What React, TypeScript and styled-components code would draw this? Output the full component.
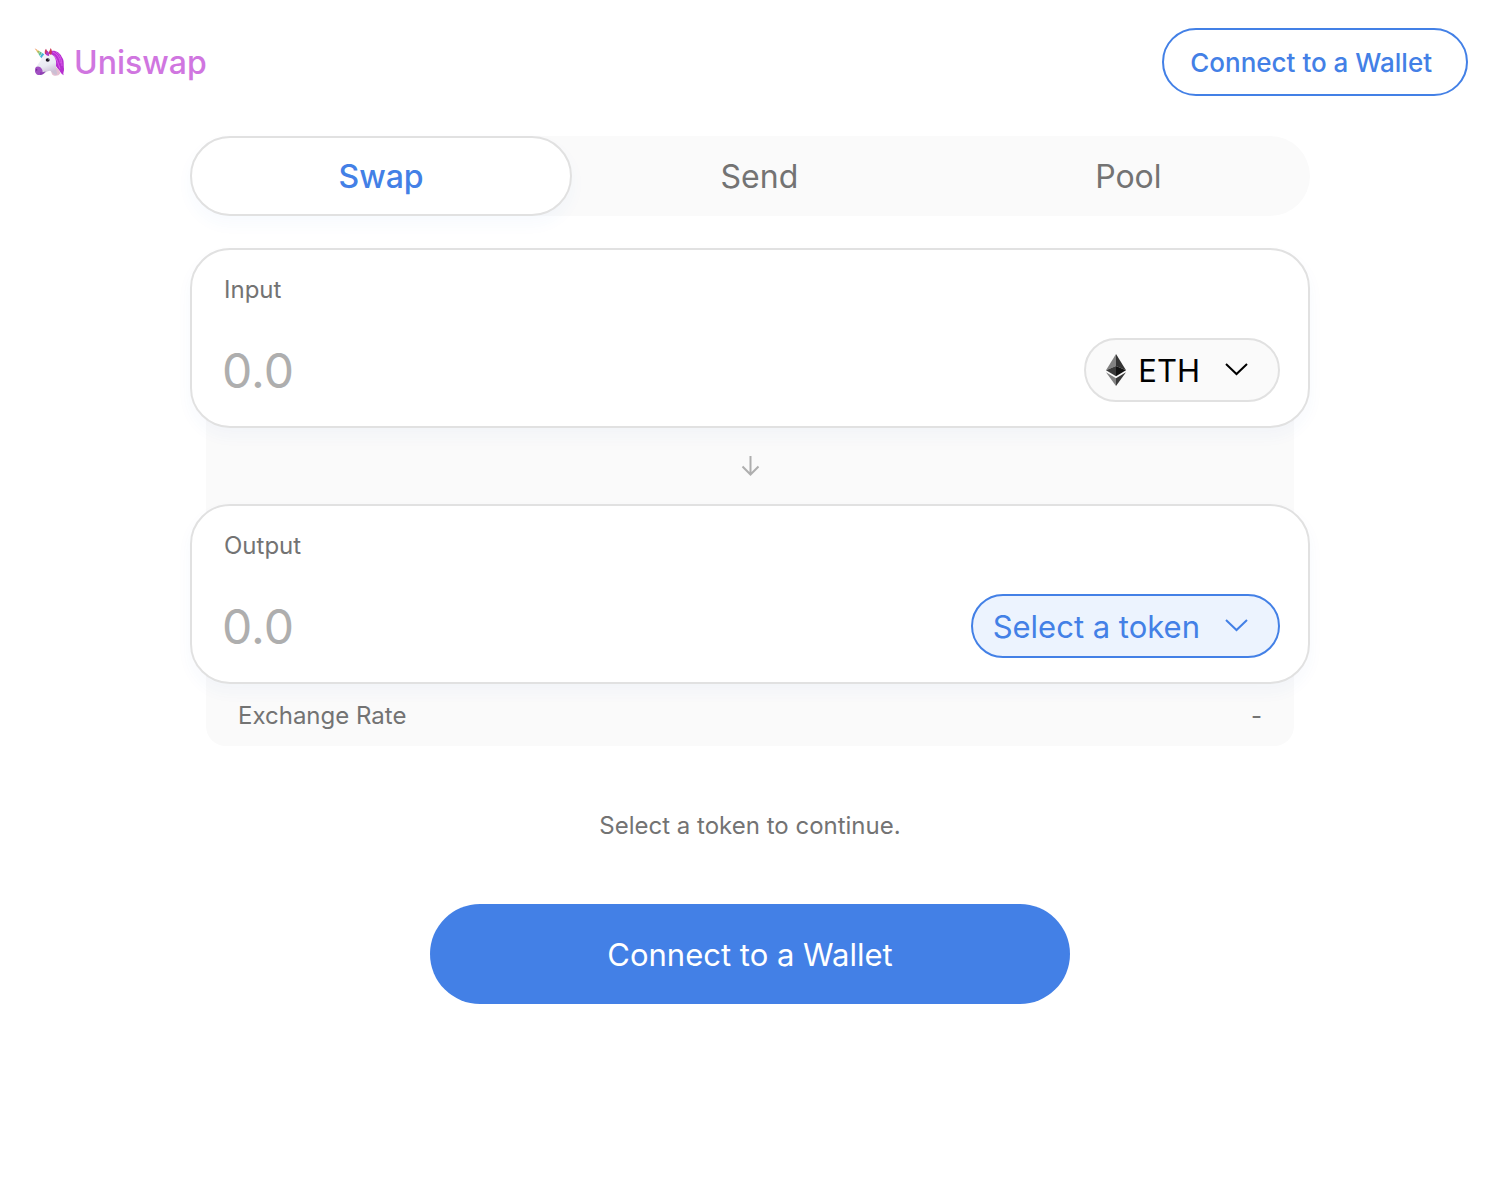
import React, { useState } from "react";
import styled, { createGlobalStyle, css } from "styled-components";

const colors = {
  blue: "#4380e6",
  paleBlue: "#ecf3fe",
  purple: "#d076e0",
  ink: "#000000",
  dove: "#737373",
  chalice: "#aeaeae",
  mercury: "#e1e1e1",
  concrete: "#fafafa",
};

const GlobalStyle = createGlobalStyle`
  *, *::before, *::after { box-sizing: border-box; }
  body {
    margin: 0;
    background: #ffffff;
    color: ${colors.ink};
    font-family: Inter, "Liberation Sans", sans-serif;
    font-size: 24px;
    line-height: 28px;
    -webkit-font-smoothing: antialiased;
  }
  button, input { font-family: inherit; }
`;

const Header = styled.header`
  display: flex;
  align-items: center;
  justify-content: space-between;
  padding: 28px 32px;
`;

const Brand = styled.a`
  display: flex;
  align-items: center;
  gap: 6px;
  color: ${colors.purple};
  font-size: 32px;
  font-weight: 500;
  line-height: 40px;
  text-decoration: none;
`;

const BrandName = styled.span`
  padding-top: 2px;
`;

const WalletStatus = styled.button`
  height: 68px;
  padding: 0 34px 0 26px;
  border: 2px solid ${colors.blue};
  border-radius: 34px;
  background: transparent;
  color: ${colors.blue};
  font-size: 26px;
  font-weight: 500;
  cursor: pointer;
`;

const Main = styled.main`
  max-width: 1184px;
  margin: 0 auto;
  padding: 12px 32px 64px;
`;

const Tabs = styled.nav`
  display: flex;
  height: 80px;
  margin-bottom: 32px;
  border-radius: 40px;
  background: ${colors.concrete};
`;

const Tab = styled.a<{ $active?: boolean }>`
  display: flex;
  flex: 1 0 auto;
  align-items: center;
  justify-content: center;
  padding-top: 2px;
  border: 2px solid transparent;
  border-radius: 40px;
  color: ${colors.dove};
  font-size: 32px;
  text-decoration: none;
  ${({ $active }) =>
    $active &&
    css`
      border-color: ${colors.mercury};
      background: #ffffff;
      box-shadow: 0 8px 16px rgba(47, 128, 237, 0.04);
      color: ${colors.blue};
      font-weight: 500;
    `}
`;

const Panel = styled.section`
  position: relative;
  z-index: 1;
  padding: 24px 28px 24px 30px;
  border: 2px solid ${colors.mercury};
  border-radius: 40px;
  background: #ffffff;
  box-shadow: 0 8px 16px rgba(47, 100, 210, 0.04);
`;

const PanelLabel = styled.label`
  display: block;
  margin: 2px 2px 34px;
  color: ${colors.dove};
`;

const PanelRow = styled.div`
  display: flex;
  align-items: center;
`;

const Amount = styled.input`
  flex: 1 1 0;
  min-width: 0;
  height: 64px;
  padding: 0;
  border: none;
  outline: none;
  background: transparent;
  font-size: 48px;
  &::placeholder {
    color: ${colors.chalice};
    opacity: 1;
  }
`;

const TokenButton = styled.button<{ $empty?: boolean }>`
  display: flex;
  align-items: center;
  height: 64px;
  padding: 0 30px 0 ${({ $empty }) => ($empty ? 20 : 14)}px;
  border: 2px solid ${({ $empty }) => ($empty ? colors.blue : colors.mercury)};
  border-radius: 32px;
  background: ${({ $empty }) => ($empty ? colors.paleBlue : colors.concrete)};
  color: ${({ $empty }) => ($empty ? colors.blue : colors.ink)};
  font-size: 31px;
  cursor: pointer;
`;

const TokenName = styled.span`
  margin: 0 24px 0 0;
  svg + & {
    margin-left: 6px;
  }
`;

const Strip = styled.div`
  display: flex;
  align-items: center;
  justify-content: center;
  height: 156px;
  margin: -40px 16px;
  background: ${colors.concrete};
`;

const RateStrip = styled.dl`
  display: flex;
  justify-content: space-between;
  margin: -40px 16px 0;
  padding: 58px 32px 16px;
  border-radius: 0 0 20px 20px;
  background: ${colors.concrete};
  color: ${colors.dove};
`;

const RateCell = styled.dd`
  margin: 0;
`;

const Hint = styled.p`
  margin: 66px 0 64px;
  color: ${colors.dove};
  text-align: center;
`;

const ConnectButton = styled.button`
  display: block;
  width: 100%;
  max-width: 640px;
  height: 100px;
  margin: 0 auto;
  border: none;
  border-radius: 50px;
  background: ${colors.blue};
  color: #ffffff;
  font-size: 31px;
  cursor: pointer;
`;

const Unicorn = () => (
  <svg width="36" height="36" viewBox="0 0 108 108" aria-hidden="true">
    <defs>
      <linearGradient id="horn" x1="0" y1="0" x2="1" y2="1">
        <stop offset="0" stopColor="#e8795f" />
        <stop offset="0.25" stopColor="#f0b04a" />
        <stop offset="0.45" stopColor="#6fc36a" />
        <stop offset="0.7" stopColor="#35b8d8" />
        <stop offset="1" stopColor="#8a9fe8" />
      </linearGradient>
      <linearGradient id="coat" x1="0" y1="0" x2="0.4" y2="1">
        <stop offset="0" stopColor="#f7f7fb" />
        <stop offset="0.65" stopColor="#e9eaf3" />
        <stop offset="1" stopColor="#cbbfd4" />
      </linearGradient>
    </defs>
    <path d="M50 25C62 15 82 22 89 38C98 49 94 62 96 74C97 82 92 86 95 94C86 90 85 82 79 76C68 66 66 44 50 25Z" fill="#b62fd0" />
    <path d="M62 24C75 29 84 42 85 58M72 24C84 31 89 46 90 66M66 34C75 44 78 58 84 74" fill="none" stroke="#d95be8" strokeWidth="3" />
    <path d="M66 58C68 72 84 76 85 88C80 97 66 98 60 91L54 72Z" fill="#e5bfd0" />
    <path d="M33 36C42 26 59 27 67 38C74 49 73 62 71 70C71 78 76 83 75 92C66 94 62 84 54 80C44 80 38 90 28 93C16 94 9 86 10 76C13 64 24 55 28 46C29 42 30 39 33 36Z" fill="url(#coat)" />
    <path d="M12 69C19 65 27 69 30 76C34 83 31 91 24 93C15 95 8 87 9 78C9 74 10 71 12 69Z" fill="#a14fc2" />
    <path d="M24 84C30 86 36 85 41 82C37 89 31 93 24 93Z" fill="#8f3fb4" />
    <path d="M8 13L37 31L28 43Z" fill="url(#horn)" />
    <path d="M16 18L14 23M23 23L19 31M30 27L24 37" stroke="#f2ead3" strokeWidth="2" />
    <path d="M39 31C37 22 39 17 42 14L49 28Z" fill="#c93a68" />
    <path d="M50 28L56 12C61 19 60 27 57 33Z" fill="#cf3458" />
    <path d="M46 20C51 23 53 29 51 36C45 35 41 33 41 29Z" fill="#b03bc8" />
    <ellipse cx="47" cy="48" rx="6" ry="5" fill="#1d1826" />
    <circle cx="49" cy="46" r="1" fill="#fff" />
    <ellipse cx="14" cy="77" rx="2" ry="3" fill="#6f2c91" />
  </svg>
);

const EthMark = () => (
  <svg width="32" height="32" viewBox="0 0 32 32" aria-hidden="true">
    <path d="M16 0L6 16.3L16 12Z" fill="#828282" />
    <path d="M16 0V12L26 16.3Z" fill="#343434" />
    <path d="M6 16.3L16 12V22.3Z" fill="#3a3a3a" />
    <path d="M26 16.3L16 12V22.3Z" fill="#131313" />
    <path d="M6 18.3L16 24.3V32Z" fill="#828282" />
    <path d="M26 18.3L16 24.3V32Z" fill="#3a3a3a" />
  </svg>
);

const Chevron = () => (
  <svg width="24" height="14" viewBox="0 0 24 14" fill="none" stroke="currentColor" strokeWidth="2" aria-hidden="true">
    <path d="M2 1L12.5 11L23 1" />
  </svg>
);

const DownArrow = () => (
  <svg width="20" height="22" viewBox="0 0 20 22" fill="none" stroke={colors.chalice} strokeWidth="2" aria-hidden="true">
    <path d="M10.5 1V20M2.5 11.5L10.5 19.5L18.5 11.5" />
  </svg>
);

type TokenPanelProps = { id: string; label: string; token?: string };

const TokenPanel = ({ id, label, token }: TokenPanelProps) => {
  const [amount, setAmount] = useState("");
  return (
    <Panel>
      <PanelLabel htmlFor={id}>{label}</PanelLabel>
      <PanelRow>
        <Amount id={id} placeholder="0.0" inputMode="decimal" value={amount} onChange={(e) => setAmount(e.target.value)} />
        <TokenButton type="button" $empty={!token}>
          {token && <EthMark />}
          <TokenName>{token ?? "Select a token"}</TokenName>
          <Chevron />
        </TokenButton>
      </PanelRow>
    </Panel>
  );
};

export default function App() {
  return (
    <>
      <GlobalStyle />
      <Header>
        <Brand href="#">
          <Unicorn />
          <BrandName>Uniswap</BrandName>
        </Brand>
        <WalletStatus type="button">Connect to a Wallet</WalletStatus>
      </Header>
      <Main>
        <Tabs>
          <Tab href="#swap" $active aria-current="page">Swap</Tab>
          <Tab href="#send">Send</Tab>
          <Tab href="#pool">Pool</Tab>
        </Tabs>
        <TokenPanel id="input-amount" label="Input" token="ETH" />
        <Strip>
          <DownArrow />
        </Strip>
        <TokenPanel id="output-amount" label="Output" />
        <RateStrip>
          <dt>Exchange Rate</dt>
          <RateCell>-</RateCell>
        </RateStrip>
        <Hint>Select a token to continue.</Hint>
        <ConnectButton type="button">Connect to a Wallet</ConnectButton>
      </Main>
    </>
  );
}
